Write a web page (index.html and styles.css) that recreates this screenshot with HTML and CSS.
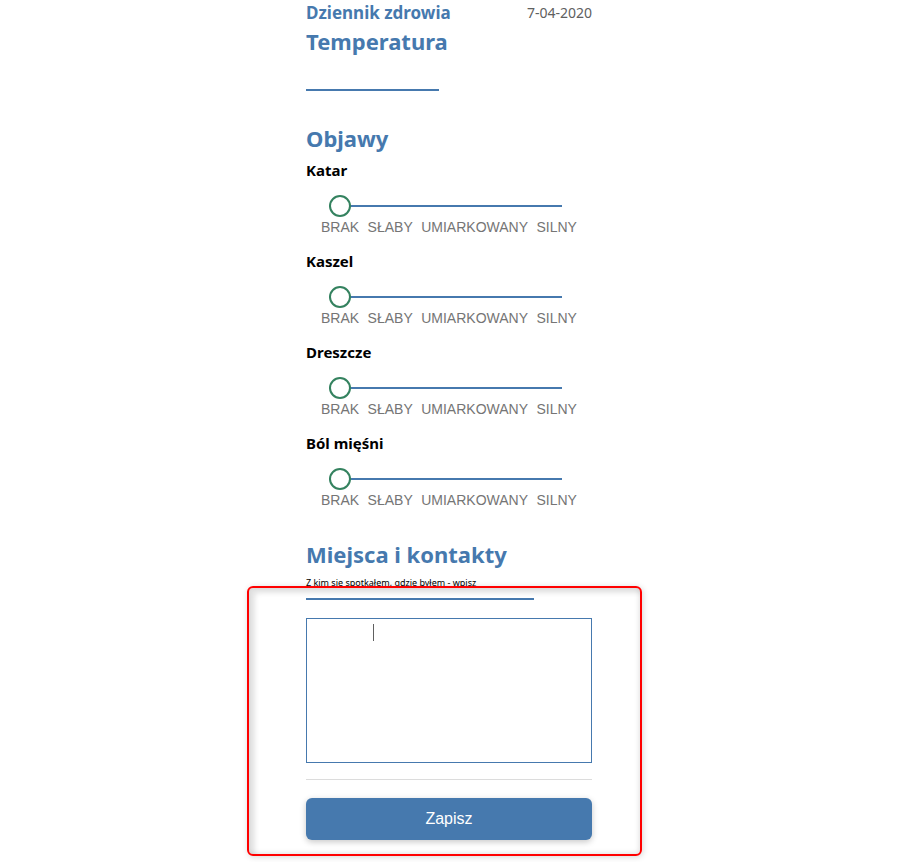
FILE: index.html
```html
<!DOCTYPE html>
<html lang="pl">
<head>
<meta charset="utf-8">
<meta name="viewport" content="width=device-width, initial-scale=1">
<title>Dziennik zdrowia</title>
<link rel="stylesheet" href="styles.css">
</head>
<body>
<form class="diary">
  <header class="top">
    <h1 class="title">Dziennik zdrowia</h1>
    <time class="date" datetime="2020-04-07">7-04-2020</time>
  </header>

  <section class="temperature">
    <h2 class="heading"><label for="temp">Temperatura</label></h2>
    <input class="line-input line-temp" id="temp" type="text" inputmode="decimal">
  </section>

  <section class="symptoms">
    <h2 class="heading">Objawy</h2>
    <div class="symptom">
      <label class="name" for="katar">Katar</label>
      <input class="slider" id="katar" type="range" min="0" max="3" value="0">
      <div class="scale"><span>BRAK</span><span>SŁABY</span><span>UMIARKOWANY</span><span>SILNY</span></div>
    </div>
    <div class="symptom">
      <label class="name" for="kaszel">Kaszel</label>
      <input class="slider" id="kaszel" type="range" min="0" max="3" value="0">
      <div class="scale"><span>BRAK</span><span>SŁABY</span><span>UMIARKOWANY</span><span>SILNY</span></div>
    </div>
    <div class="symptom">
      <label class="name" for="dreszcze">Dreszcze</label>
      <input class="slider" id="dreszcze" type="range" min="0" max="3" value="0">
      <div class="scale"><span>BRAK</span><span>SŁABY</span><span>UMIARKOWANY</span><span>SILNY</span></div>
    </div>
    <div class="symptom">
      <label class="name" for="miesnie">Ból mięśni</label>
      <input class="slider" id="miesnie" type="range" min="0" max="3" value="0">
      <div class="scale"><span>BRAK</span><span>SŁABY</span><span>UMIARKOWANY</span><span>SILNY</span></div>
    </div>
  </section>

  <section class="contacts">
    <h2 class="heading" id="contacts-title">Miejsca i kontakty</h2>
    <label class="hint" for="person">Z kim się spotkałem, gdzie byłem - wpisz</label>
    <div class="entry">
      <input class="line-input line-person" id="person" type="text">
      <div class="notes-box">
        <textarea class="notes" aria-labelledby="contacts-title"></textarea>
        <span class="caret"></span>
      </div>
      <hr class="rule">
      <button class="save" type="button">Zapisz</button>
      <div class="marker"></div>
    </div>
  </section>
</form>
</body>
</html>
```
FILE: styles.css
```css
* {
  box-sizing: border-box;
}

body {
  margin: 0;
  background: #fff;
  color: #000;
  font-family: "Segoe UI", "Noto Sans", "Open Sans", sans-serif;
}

.diary {
  max-width: 299px;
  margin: 0 auto;
  padding: 0 13px 22px 0;
}

.top {
  display: flex;
  justify-content: space-between;
  align-items: center;
}

.title {
  margin: 0;
  color: #4679ae;
  font-size: 17px;
  line-height: 26px;
}

.date {
  color: #606060;
  font-size: 14px;
  line-height: 26px;
}

.heading {
  margin: 0;
  padding-bottom: 2px;
  color: #4679ae;
  font-size: 22px;
  line-height: 30px;
}

.line-input {
  display: block;
  padding: 0;
  border: 0;
  border-bottom: 2px solid #4679ae;
  background: none;
  outline: none;
}

.line-temp {
  width: 133px;
  height: 33px;
}

.symptoms {
  margin-top: 32px;
}

.symptom {
  margin-top: 15px;
}

.heading + .symptom {
  margin-top: 6px;
}

.name {
  display: block;
  margin-bottom: 16px;
  font-size: 15px;
  font-weight: 700;
  line-height: 18px;
}

.slider {
  display: block;
  width: calc(100% - 53px);
  height: 22px;
  margin: 0 30px 0 23px;
  appearance: none;
  background: none;
}

.slider::-webkit-slider-runnable-track {
  height: 2px;
  background: #4679ae;
}

.slider::-webkit-slider-thumb {
  width: 22px;
  height: 22px;
  margin-top: -10px;
  appearance: none;
  border: 2px solid #34825f;
  border-radius: 50%;
  background: #fff;
}

.scale {
  display: flex;
  justify-content: space-between;
  margin: 0 15px;
  color: #757575;
  font-family: "Liberation Sans", Arial, sans-serif;
  font-size: 14px;
  line-height: 20px;
}

.contacts {
  margin-top: 29px;
}

.hint {
  display: block;
  margin-top: 4px;
  font-size: 9px;
  line-height: 16px;
}

.entry {
  position: relative;
}

.line-person {
  width: 228px;
  height: 9px;
}

.notes-box {
  position: relative;
  margin-top: 18px;
}

.notes {
  display: block;
  width: 100%;
  height: 145px;
  padding: 8px;
  border: 1px solid #4679ae;
  background: #fff;
  outline: none;
  resize: none;
}

.caret {
  position: absolute;
  top: 6px;
  left: 67px;
  width: 1px;
  height: 17px;
  background: #606060;
}

.rule {
  height: 1px;
  margin: 16px 0 18px;
  border: 0;
  background: #dcdcdc;
}

.save {
  display: block;
  width: 100%;
  height: 42px;
  border: 0;
  border-radius: 6px;
  background: #4679ae;
  box-shadow: 0 2px 6px rgba(0, 0, 0, 0.22);
  color: #fff;
  font-family: "Liberation Sans", Arial, sans-serif;
  font-size: 16px;
}

.marker {
  position: absolute;
  inset: -5px -50px -16px -59px;
  border: 2px solid #f00;
  border-radius: 6px;
  box-shadow: 1px 1px 6px rgba(0, 0, 0, 0.16), inset 6px 5px 5px rgba(0, 0, 0, 0.11), inset -1px -1px 5px rgba(0, 0, 0, 0.12);
  pointer-events: none;
}
```
